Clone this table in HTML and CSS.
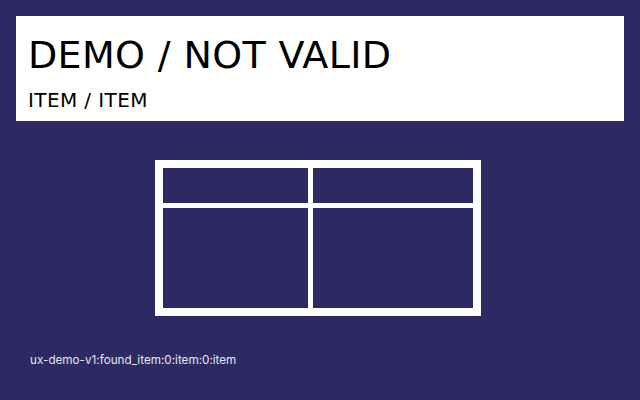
FILE: index.html
```html
<!DOCTYPE html>
<html>
<head>
<meta charset="utf-8">
<link rel="stylesheet" href="styles.css">
</head>
<body>
<div class="page">
  <header class="banner">
    <h1 class="title">DEMO / NOT VALID</h1>
    <div class="subtitle">ITEM / ITEM</div>
  </header>
  <div class="stage">
    <div class="grid">
      <div class="cell"></div>
      <div class="cell"></div>
      <div class="cell"></div>
      <div class="cell"></div>
    </div>
  </div>
  <div class="footer">ux-demo-v1:found_item:0:item:0:item</div>
</div>
</body>
</html>
```
FILE: styles.css
```css
html, body {
  margin: 0;
  padding: 0;
  background: #2d2962;
  width: 640px;
  height: 400px;
  overflow: hidden;
}
.page {
  padding: 16px;
  display: flex;
  flex-direction: column;
}
.banner {
  background: #ffffff;
  height: 105px;
  box-sizing: border-box;
  padding: 17px 12px 0;
  font-family: "DejaVu Sans", sans-serif;
  color: #000;
}
.title {
  margin: 0;
  font-size: 38px;
  font-weight: normal;
  letter-spacing: 0.35px;
  line-height: 44px;
}
.subtitle {
  margin-top: 12px;
  font-size: 20px;
  letter-spacing: 0.4px;
  line-height: 22px;
}
.stage {
  margin-top: 39px;
  padding-left: 139px;
  display: flex;
}
.grid {
  background: #ffffff;
  padding: 8px;
  display: grid;
  grid-template-columns: 145px 160px;
  grid-template-rows: 35px 100px;
  gap: 5px;
}
.cell {
  background: #2d2962;
}
.footer {
  margin-top: 37px;
  padding-left: 14px;
  font-family: Inter, sans-serif;
  font-size: 11.7px;
  line-height: 14px;
  color: #e6e6f0;
}
```
